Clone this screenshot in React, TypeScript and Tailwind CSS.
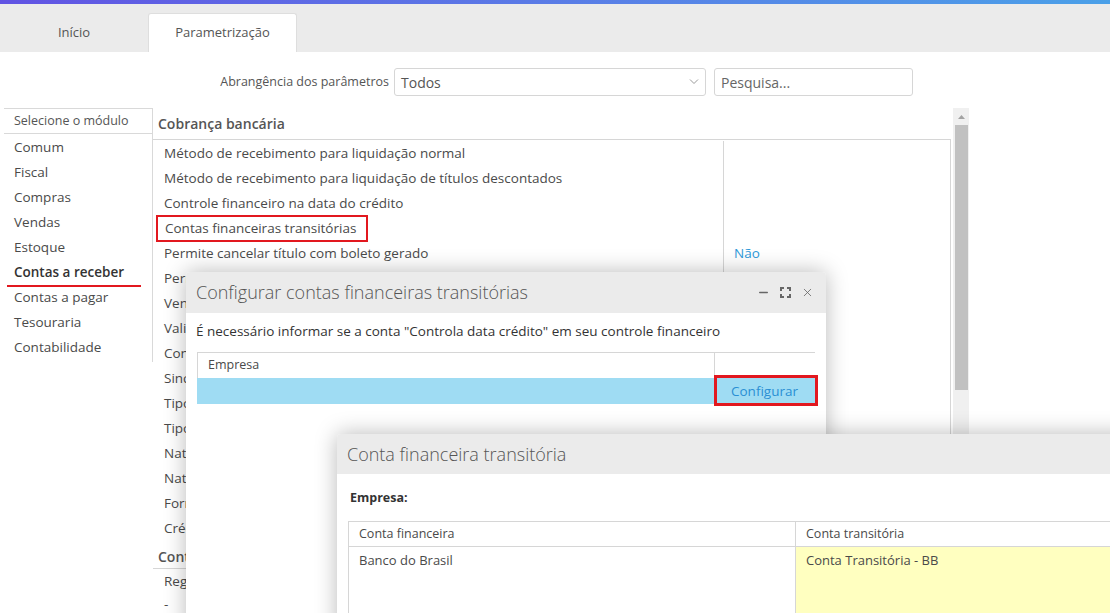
import { Minus, X } from 'lucide-react';

const modules = ['Comum', 'Fiscal', 'Compras', 'Vendas', 'Estoque', 'Contas a receber', 'Contas a pagar', 'Tesouraria', 'Contabilidade'];

const params = [
  { label: 'Método de recebimento para liquidação normal' },
  { label: 'Método de recebimento para liquidação de títulos descontados' },
  { label: 'Controle financeiro na data do crédito' },
  { label: 'Contas financeiras transitórias', marked: true },
  { label: 'Permite cancelar título com boleto gerado', value: 'Não' },
  { label: 'Permite alterar vencimento de título com boleto' },
  { label: 'Vencimento de títulos em feriados' },
  { label: 'Validar carteira de cobrança' },
  { label: 'Conta de juros de cobrança' },
  { label: 'Sincronizar retorno bancário' },
  { label: 'Tipo de cobrança padrão' },
  { label: 'Tipo de documento padrão' },
  { label: 'Natureza de juros' },
  { label: 'Natureza de descontos' },
  { label: 'Forma de pagamento padrão' },
  { label: 'Crédito automático de retorno' },
];

function MaximizeIcon() {
  return (
    <svg width="11" height="11" viewBox="0 0 11 11" fill="none" stroke="#666" strokeWidth="2">
      <path d="M1 4V1h3M7 1h3v3M10 7v3H7M4 10H1V7" />
    </svg>
  );
}

export default function App() {
  return (
    <div className="relative w-[1110px] h-[613px] overflow-hidden bg-white text-[#4a4a4a] font-['Open_Sans',sans-serif]">
      <div className="h-[4px] bg-gradient-to-r from-[#6153e3] to-[#4aa0e8]"></div>

      {/* tabs */}
      <div className="h-[48px] bg-[#ebebeb] flex items-end">
        <div className="w-[148px] h-[39px] flex items-center justify-center text-[13px] text-[#555]">Início</div>
        <div className="w-[149px] h-[39px] bg-white rounded-t-[3px] border-t border-x border-[#dedede] flex items-center justify-center text-[13px] text-[#555]">
          Parametrização
        </div>
      </div>

      {/* toolbar */}
      <div className="h-[56px] pt-[16px]">
        <div className="w-[913px] h-[28px] flex justify-end items-center">
          <span className="text-[12.5px] text-[#555] mr-[5px]">Abrangência dos parâmetros</span>
          <div className="w-[312px] h-[28px] border border-[#d6d6d6] rounded-[3px] flex items-center justify-between px-[6px] text-[14px] text-[#555]">
            <span>Todos</span>
            <svg width="10" height="6" viewBox="0 0 10 6" fill="none" stroke="#999" strokeWidth="1">
              <path d="M1 0.5l4 4 4-4" />
            </svg>
          </div>
          <div className="ml-[8px] w-[199px] h-[28px] border border-[#d6d6d6] rounded-[3px] flex items-center px-[6px] text-[14px] text-[#666]">
            Pesquisa...
          </div>
        </div>
      </div>

      <div className="flex">
        {/* module list */}
        <div className="w-[153px] pl-[4px] self-start">
          <div className="border-t border-[#d9d9d9] border-r">
            <div className="h-[25px] border-b border-[#d9d9d9] pl-[10px] flex items-center text-[12.5px] text-[#555]">
              Selecione o módulo
            </div>
            <div className="pt-[1px] pb-[2px]">
              {modules.map((m) => (
                <div key={m} className="h-[25px] flex items-center pl-[10px] text-[13.5px]">
                  {m === 'Contas a receber' ? (
                    <span className="font-semibold text-[#333] relative">
                      {m}
                      <span className="absolute left-[-7px] right-[-17px] bottom-[-4px] h-[2px] bg-[#e2181f]"></span>
                    </span>
                  ) : (
                    <span>{m}</span>
                  )}
                </div>
              ))}
            </div>
          </div>
        </div>

        {/* parameters */}
        <div className="w-[798px]">
          <div className="h-[31px] pl-[5px] flex items-center text-[14px] font-semibold text-[#555]">Cobrança bancária</div>
          <div className="border-t border-r border-[#d6d6d6] pt-[1px]">
            {params.map((p) => (
              <div key={p.label} className="flex h-[25px]">
                <div className="w-[570px] flex items-center pl-[11px] text-[13.5px]">
                  {p.marked ? (
                    <span className="ml-[-8px] pl-[7px] pr-[10px] h-[27px] flex items-center border-2 border-[#e2181f]">{p.label}</span>
                  ) : (
                    <span className="whitespace-nowrap">{p.label}</span>
                  )}
                </div>
                <div className="flex-1 border-l border-[#d6d6d6] pl-[10px] flex items-center text-[13.5px] text-[#2f9ad9]">
                  {p.value}
                </div>
              </div>
            ))}
          </div>
          <div className="h-[27px] pl-[5px] pt-[3px] flex items-center text-[14px] font-semibold text-[#555]">Contas a receber</div>
          <div className="border-t border-[#d6d6d6]">
            <div className="h-[25px] flex items-center pl-[11px] text-[13.5px]">Registro de boletos</div>
            <div className="h-[20px] flex items-center pl-[11px] text-[13.5px]">-</div>
          </div>
        </div>

        {/* scrollbar */}
        <div className="ml-[2px] w-[16px] h-[520px] bg-[#f0f0f0] flex flex-col items-center">
          <div className="h-[17px] flex items-center justify-center">
            <svg width="7" height="4" viewBox="0 0 7 4"><path d="M0 4L3.5 0L7 4z" fill="#a3a3a3" /></svg>
          </div>
          <div className="w-[13px] h-[265px] bg-[#c1c1c1]"></div>
        </div>
      </div>

      {/* dialog 1 */}
      <div className="absolute left-[186px] top-[272px] w-[640px] h-[360px] bg-white rounded-t-[4px] shadow-[0_0_22px_rgba(0,0,0,0.28)]">
        <div className="h-[41px] bg-[#ebebeb] rounded-t-[4px] flex items-center justify-between pl-[10px] pr-[12px]">
          <span className="text-[18px] font-light text-[#555]">Configurar contas financeiras transitórias</span>
          <div className="flex items-center gap-[10px] text-[#666]">
            <Minus size={13} strokeWidth={2.5} />
            <MaximizeIcon />
            <X size={13} strokeWidth={1.5} />
          </div>
        </div>
        <div className="pl-[10px] pt-[8px] h-[39px] text-[13.5px] text-[#333]">
          É necessário informar se a conta "Controla data crédito" em seu controle financeiro
        </div>
        <div className="ml-[11px] w-[618px] border-t border-[#d6d6d6]">
          <div className="flex h-[25px]">
            <div className="w-[517px] border-l border-[#d6d6d6] pl-[10px] flex items-center text-[12.5px]">Empresa</div>
            <div className="flex-1 border-l border-[#d6d6d6]"></div>
          </div>
          <div className="flex h-[26px] bg-[#9fdcf3]">
            <div className="w-[517px]"></div>
            <div className="flex-1 relative flex items-center justify-center text-[13.5px] text-[#2a8fd4]">
              <span className="absolute left-[0px] right-[-3px] top-[-3px] bottom-[-2px] border-[3px] border-[#e2181f]"></span>
              Configurar
            </div>
          </div>
        </div>
      </div>

      {/* dialog 2 */}
      <div className="absolute left-[337px] top-[434px] w-[820px] h-[200px] bg-white rounded-t-[4px] shadow-[0_0_22px_rgba(0,0,0,0.28)]">
        <div className="h-[40px] bg-[#ebebeb] rounded-t-[4px] flex items-center pl-[10px]">
          <span className="text-[18px] font-light text-[#555]">Conta financeira transitória</span>
        </div>
        <div className="pl-[13px] pt-[15px] h-[47px] text-[12.5px] font-bold text-[#333]">Empresa:</div>
        <div className="ml-[11px] border-t border-l border-[#d6d6d6]">
          <div className="flex h-[25px] border-b border-[#d6d6d6] text-[12.5px]">
            <div className="w-[446px] pl-[10px] flex items-center">Conta financeira</div>
            <div className="flex-1 border-l border-[#d6d6d6] pl-[10px] flex items-center">Conta transitória</div>
          </div>
          <div className="flex h-[80px] text-[13px]">
            <div className="w-[446px] pl-[10px] pt-[4px]">Banco do Brasil</div>
            <div className="flex-1 border-l border-[#d6d6d6] bg-[#ffffc0] pl-[10px] pt-[4px]">Conta Transitória - BB</div>
          </div>
        </div>
      </div>
    </div>
  );
}
